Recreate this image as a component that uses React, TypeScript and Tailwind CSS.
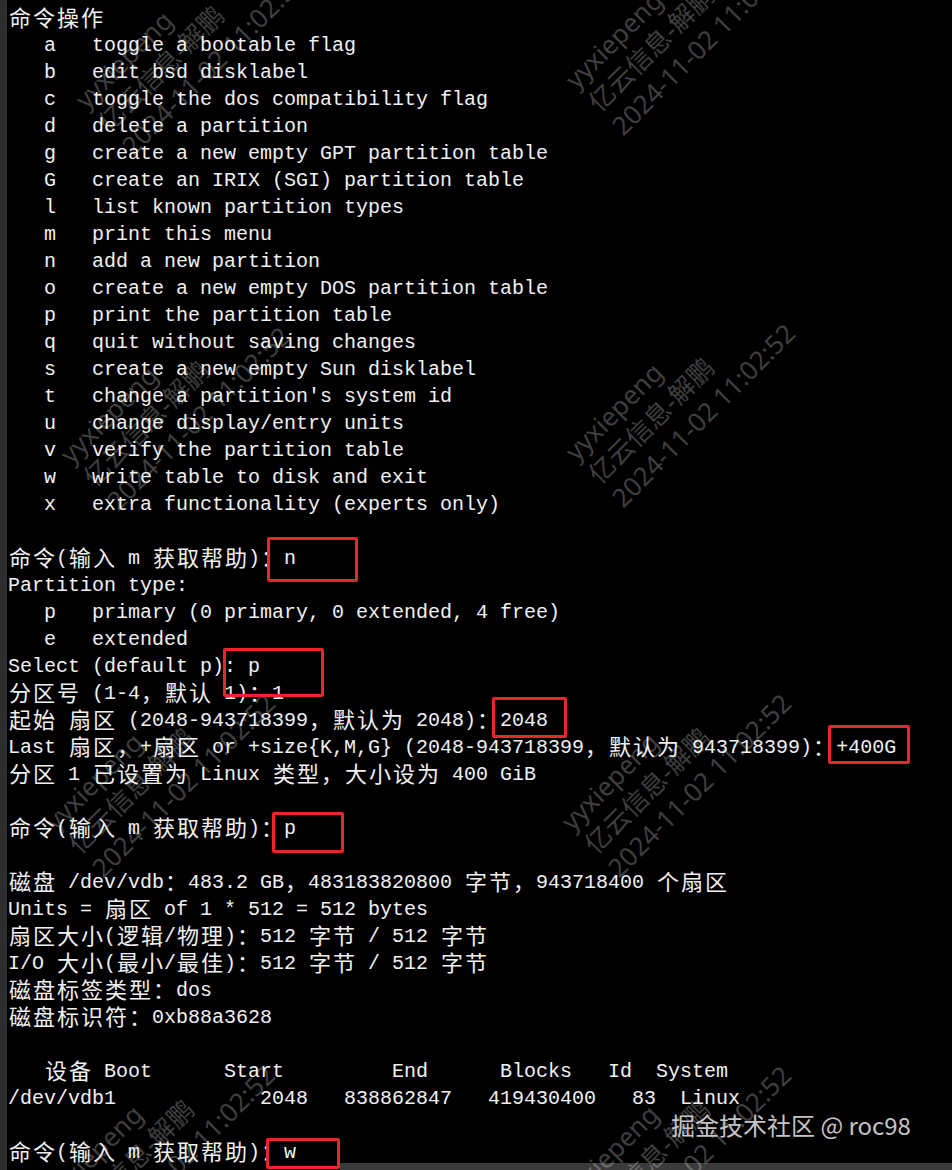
import React from "react";

const LINES: string[] = [
  "命令操作",
  "   a   toggle a bootable flag",
  "   b   edit bsd disklabel",
  "   c   toggle the dos compatibility flag",
  "   d   delete a partition",
  "   g   create a new empty GPT partition table",
  "   G   create an IRIX (SGI) partition table",
  "   l   list known partition types",
  "   m   print this menu",
  "   n   add a new partition",
  "   o   create a new empty DOS partition table",
  "   p   print the partition table",
  "   q   quit without saving changes",
  "   s   create a new empty Sun disklabel",
  "   t   change a partition's system id",
  "   u   change display/entry units",
  "   v   verify the partition table",
  "   w   write table to disk and exit",
  "   x   extra functionality (experts only)",
  "",
  "命令(输入 m 获取帮助)：n",
  "Partition type:",
  "   p   primary (0 primary, 0 extended, 4 free)",
  "   e   extended",
  "Select (default p): p",
  "分区号 (1-4，默认 1)：1",
  "起始 扇区 (2048-943718399，默认为 2048)：2048",
  "Last 扇区，+扇区 or +size{K,M,G} (2048-943718399，默认为 943718399)：+400G",
  "分区 1 已设置为 Linux 类型，大小设为 400 GiB",
  "",
  "命令(输入 m 获取帮助)：p",
  "",
  "磁盘 /dev/vdb：483.2 GB，483183820800 字节，943718400 个扇区",
  "Units = 扇区 of 1 * 512 = 512 bytes",
  "扇区大小(逻辑/物理)：512 字节 / 512 字节",
  "I/O 大小(最小/最佳)：512 字节 / 512 字节",
  "磁盘标签类型：dos",
  "磁盘标识符：0xb88a3628",
  "",
  "   设备 Boot      Start         End      Blocks   Id  System",
  "/dev/vdb1            2048   838862847   419430400   83  Linux",
  "",
  "命令(输入 m 获取帮助)：w",
];

const isWide = (ch: string) => (ch.codePointAt(0) ?? 0) >= 0x2e80;

function Line({ text }: { text: string }) {
  const segs: { wide: boolean; s: string }[] = [];
  for (const ch of Array.from(text)) {
    const w = isWide(ch);
    const last = segs[segs.length - 1];
    if (!w && last && !last.wide) last.s += ch;
    else segs.push({ wide: w, s: ch });
  }
  return (
    <div className="flex h-[27px] items-start whitespace-pre">
      {segs.map((g, i) =>
        g.wide ? (
          <span
            key={i}
            className="inline-block w-[24px] shrink-0 text-center font-['Noto_Sans_CJK_SC',sans-serif] text-[22px] leading-[28px]"
          >
            {g.s}
          </span>
        ) : (
          <span key={i} className="shrink-0 leading-[33px]">
            {g.s}
          </span>
        )
      )}
    </div>
  );
}

function RedBox({ l, t, w, h }: { l: number; t: number; w: number; h: number }) {
  return (
    <div
      className="pointer-events-none absolute rounded-[2px] border-[3px] border-[#e8262c]"
      style={{ left: l, top: t, width: w, height: h }}
    />
  );
}

function Watermark({ x, y }: { x: number; y: number }) {
  return (
    <div
      className="pointer-events-none absolute -translate-x-1/2 -translate-y-1/2 -rotate-45 whitespace-nowrap font-['Noto_Sans','Noto_Sans_CJK_SC',sans-serif] text-[26px] leading-[33px] text-white/25"
      style={{ left: x, top: y }}
    >
      <div>yyxiepeng</div>
      <div>亿云信息-解鹏</div>
      <div>2024-11-02 11:02:52</div>
    </div>
  );
}

export default function App() {
  const marks = [
    [190, 40],
    [680, 20],
    [175, 395],
    [680, 392],
    [160, 762],
    [676, 762],
    [160, 1134],
    [676, 1134],
  ];
  return (
    <div className="relative flex h-[1170px] w-[952px] overflow-hidden bg-black">
      <div className="w-[7px] shrink-0 bg-[#2d2d2d]" />
      <div className="flex flex-1 flex-col">
        <div className="flex-1 pl-[1px] pt-[2px] font-['Liberation_Mono',monospace] text-[20px] text-[#f0f0f0]">
          {LINES.map((t, i) => (
            <Line key={i} text={t} />
          ))}
        </div>
        <div className="flex h-[7px] shrink-0">
          <div className="w-[333px] bg-black" />
          <div className="flex-1 bg-[#3b3b3b]" />
        </div>
      </div>

      {marks.map(([x, y], i) => (
        <Watermark key={i} x={x} y={y} />
      ))}

      <RedBox l={267} t={537} w={91} h={45} />
      <RedBox l={223} t={648} w={101} h={49} />
      <RedBox l={492} t={697} w={75} h={41} />
      <RedBox l={828} t={725} w={82} h={39} />
      <RedBox l={272} t={812} w={72} h={41} />
      <RedBox l={266} t={1138} w={74} h={31} />

      <div className="pointer-events-none absolute left-[671px] top-[1108px] whitespace-nowrap font-['Noto_Sans_CJK_SC',sans-serif] text-[24px] leading-[34px] text-[#c4c4c4]">
        掘金技术社区 @ roc98
      </div>
    </div>
  );
}
